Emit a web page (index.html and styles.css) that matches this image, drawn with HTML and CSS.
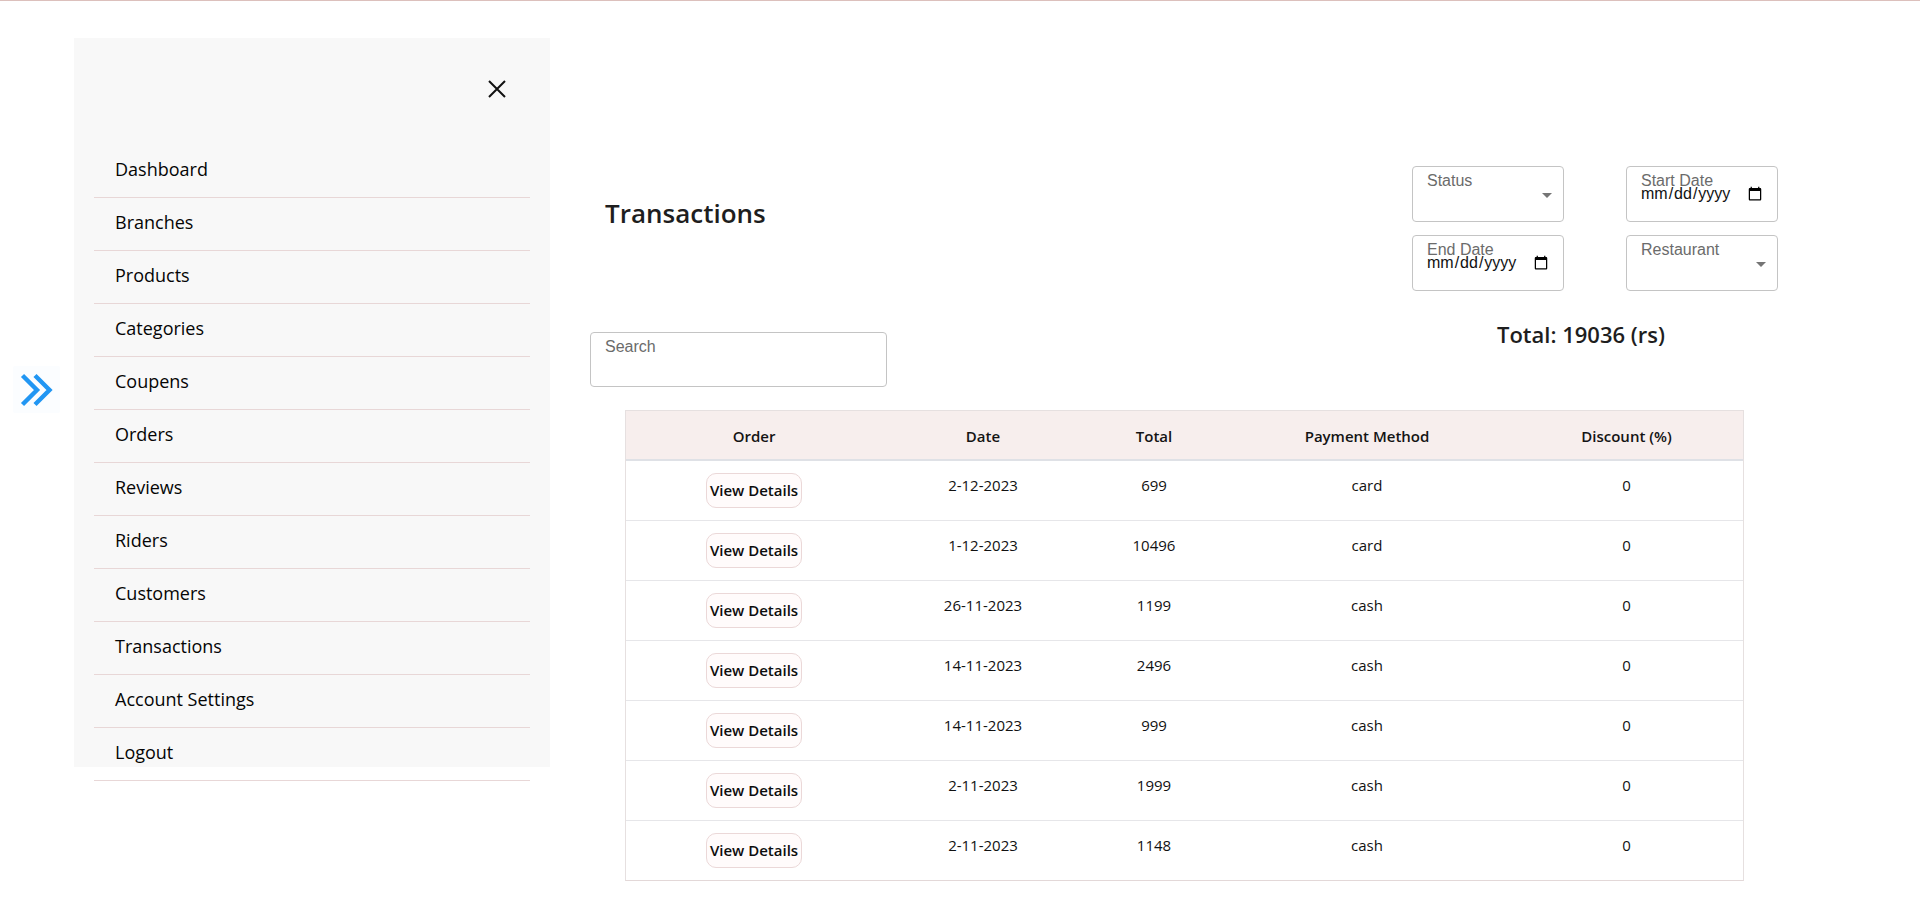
FILE: index.html
```html
<!DOCTYPE html>
<html lang="en">
<head>
<meta charset="utf-8">
<title>Transactions</title>
<link rel="stylesheet" href="styles.css">
</head>
<body>
<div class="topline"></div>
<div class="layout">
  <div class="rail">
    <button class="open-btn" aria-label="open">
      <svg width="34" height="34" viewBox="0 0 34 34"><polyline points="2.5,2.5 17,17 2.5,31.5" fill="none" stroke="#2196f3" stroke-width="4.4"/><polyline points="15,2.5 29.5,17 15,31.5" fill="none" stroke="#2196f3" stroke-width="4.4"/></svg>
    </button>
  </div>
  <aside class="sidebar">
    <div class="sidebar-head">
      <button class="close-btn" aria-label="close">
        <svg width="18" height="18" viewBox="0 0 18 18"><path d="M1 1L17 17M17 1L1 17" stroke="#111" stroke-width="2" fill="none"/></svg>
      </button>
    </div>
    <ul class="nav">
      <li>Dashboard</li>
      <li>Branches</li>
      <li>Products</li>
      <li>Categories</li>
      <li>Coupens</li>
      <li>Orders</li>
      <li>Reviews</li>
      <li>Riders</li>
      <li>Customers</li>
      <li>Transactions</li>
      <li>Account Settings</li>
      <li>Logout</li>
    </ul>
  </aside>
  <main class="main">
    <div class="top">
      <h1 class="title">Transactions</h1>
      <div class="filters">
        <div class="field select">
          <span class="field-label">Status</span>
          <svg class="arrow" width="10" height="5" viewBox="0 0 10 5"><path d="M0 0L5 5L10 0Z" fill="#757575"/></svg>
        </div>
        <div class="field date">
          <span class="field-label">Start Date</span>
          <input type="date" class="date-input">
        </div>
        <div class="field date">
          <span class="field-label">End Date</span>
          <input type="date" class="date-input">
        </div>
        <div class="field select">
          <span class="field-label">Restaurant</span>
          <svg class="arrow" width="10" height="5" viewBox="0 0 10 5"><path d="M0 0L5 5L10 0Z" fill="#757575"/></svg>
        </div>
      </div>
    </div>
    <div class="toolbar">
      <div class="field search"><span class="field-label">Search</span></div>
      <div class="total">Total: 19036 (rs)</div>
    </div>
    <table class="tx">
      <colgroup>
        <col style="width:256px"><col style="width:202px"><col style="width:140px"><col style="width:286px"><col style="width:233px">
      </colgroup>
      <thead>
        <tr><th>Order</th><th>Date</th><th>Total</th><th>Payment Method</th><th>Discount (%)</th></tr>
      </thead>
      <tbody>
        <tr><td><button class="view">View Details</button></td><td>2-12-2023</td><td>699</td><td>card</td><td>0</td></tr>
        <tr><td><button class="view">View Details</button></td><td>1-12-2023</td><td>10496</td><td>card</td><td>0</td></tr>
        <tr><td><button class="view">View Details</button></td><td>26-11-2023</td><td>1199</td><td>cash</td><td>0</td></tr>
        <tr><td><button class="view">View Details</button></td><td>14-11-2023</td><td>2496</td><td>cash</td><td>0</td></tr>
        <tr><td><button class="view">View Details</button></td><td>14-11-2023</td><td>999</td><td>cash</td><td>0</td></tr>
        <tr><td><button class="view">View Details</button></td><td>2-11-2023</td><td>1999</td><td>cash</td><td>0</td></tr>
        <tr><td><button class="view">View Details</button></td><td>2-11-2023</td><td>1148</td><td>cash</td><td>0</td></tr>
      </tbody>
    </table>
  </main>
</div>
</body>
</html>
```

FILE: styles.css
```css
* { box-sizing: border-box; }
html, body { margin: 0; padding: 0; }
body {
  font-family: "Open Sans", "Noto Sans", sans-serif;
  color: #111;
  background: #fff;
  padding-bottom: 45px;
}
.topline { height: 1px; background: #dcc0bc; }
.layout { display: flex; align-items: flex-start; }

.rail { width: 74px; flex: none; padding: 365px 0 0 13px; }
.open-btn {
  width: 47px; height: 47px; border: 0; padding: 0; margin: 0;
  background: #fbfdff; border-radius: 2px;
  display: flex; align-items: center; justify-content: center;
}

.sidebar {
  width: 476px; height: 729px; flex: none;
  margin-top: 37px;
  background: #f8f8f8;
  padding: 0 20px;
}
.sidebar-head {
  height: 107px;
  display: flex; justify-content: flex-end; align-items: flex-start;
  padding: 42px 24px 0 0;
}
.close-btn { border: 0; background: transparent; padding: 0; margin: 0; width: 18px; height: 18px; display: block; }
.close-btn svg { display: block; }
.nav { list-style: none; margin: 0; padding: 0; }
.nav li {
  height: 53px; line-height: 48px;
  border-bottom: 1px solid #e8d7d7;
  padding-left: 21px;
  font-size: 18px; font-weight: 500; color: #050505;
}

.main { width: 1188px; flex: none; margin-left: 40px; padding-top: 165px; }
.top { display: flex; justify-content: space-between; align-items: flex-start; }
.title { margin: 32px 0 0 15px; font-size: 26px; line-height: 1.2; font-weight: 600; color: #1e1e1e; }
.filters { display: grid; grid-template-columns: 152px 152px; column-gap: 62px; row-gap: 13px; }

.field {
  position: relative;
  height: 56px;
  border: 1px solid #c4c4c4; border-radius: 4px;
  background: #fff;
  font-family: "Liberation Sans", Arial, sans-serif;
}
.field-label {
  position: absolute; left: 14px; top: 5px;
  font-size: 16px; line-height: 18px; color: #6b6b6b;
}
.select { display: flex; align-items: center; justify-content: flex-end; padding: 2px 11px 0 0; }
.arrow { display: block; }
.date { padding: 17px 12px 0 13px; }
.date-input {
  display: block; width: 100%;
  border: 0; margin: 0; padding: 0;
  background: transparent;
  font-family: "Liberation Sans", Arial, sans-serif;
  font-size: 16px; line-height: 18px; color: #111;
  outline: none;
}

.toolbar { display: flex; justify-content: space-between; align-items: flex-start; margin-top: 26px; }
.search { width: 297px; height: 55px; margin-top: 15px; }
.total { width: 340px; margin: 4px 27px 0 0; text-align: center; font-size: 22px; line-height: 1.2; font-weight: 600; color: #1e1e1e; }

.tx {
  margin: 23px 35px 0;
  width: 1117px;
  table-layout: fixed;
  border-collapse: separate; border-spacing: 0;
  border: 1px solid #e6e0e0;
  border-bottom-color: #e3d8d8;
}
.tx th {
  height: 50px; padding: 2px 0 0;
  background: #f7eeed;
  border-bottom: 2px solid #dfe1e6;
  font-size: 15px; font-weight: 600; color: #141414;
  text-align: center; vertical-align: middle;
}
.tx td {
  padding: 12px 8px;
  border-bottom: 1px solid #e6e6e9;
  font-size: 15px; line-height: 24px; color: #111;
  text-align: center; vertical-align: top;
}
.tx tbody tr:last-child td { border-bottom: 0; }
.view {
  font-family: "Open Sans", "Noto Sans", sans-serif;
  font-size: 15px; font-weight: 600; line-height: 21px; color: #0d0d0d;
  padding: 6px 3px; margin: 0;
  background: #fffbfb;
  border: 1px solid #ebd8d8; border-radius: 10px;
}
```
